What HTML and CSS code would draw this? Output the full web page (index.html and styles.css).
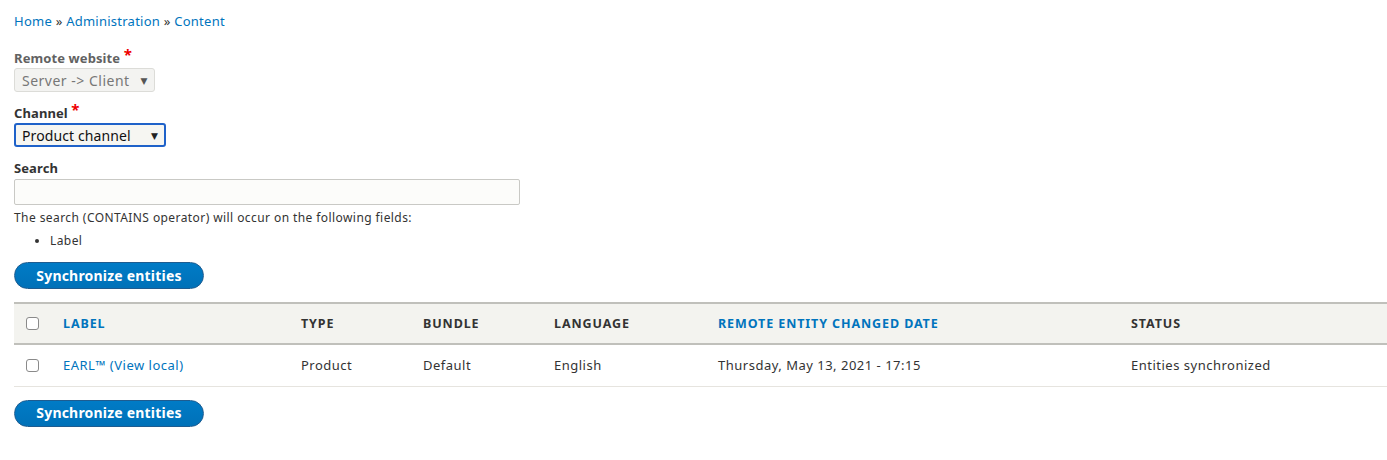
FILE: index.html
```html
<!DOCTYPE html>
<html lang="en">
<head>
<meta charset="utf-8">
<title>Content</title>
<link rel="stylesheet" href="styles.css">
</head>
<body>
<div class="page">
  <nav class="breadcrumb">
    <a href="#">Home</a> » <a href="#">Administration</a> » <a href="#">Content</a>
  </nav>

  <form class="form">
    <div class="form-item">
      <label class="form-label is-disabled">Remote website <span class="req">*</span></label>
      <div class="select select--disabled">
        <span class="select-text">Server -&gt; Client</span>
        <span class="select-arrow">▼</span>
      </div>
    </div>

    <div class="form-item form-item--channel">
      <label class="form-label">Channel <span class="req">*</span></label>
      <div class="select select--focus">
        <span class="select-text">Product channel</span>
        <span class="select-arrow">▼</span>
      </div>
    </div>

    <div class="form-item form-item--search">
      <label class="form-label form-label--search">Search</label>
      <div class="text-input"></div>
      <div class="description">
        The search (CONTAINS operator) will occur on the following fields:
        <ul class="field-list">
          <li>Label</li>
        </ul>
      </div>
    </div>

    <div class="actions">
      <button type="button" class="button-primary">Synchronize entities</button>
    </div>

    <table class="entities">
      <thead>
        <tr>
          <th class="c-check"><span class="checkbox"></span></th>
          <th class="c-label"><a href="#">LABEL</a></th>
          <th class="c-type">TYPE</th>
          <th class="c-bundle">BUNDLE</th>
          <th class="c-lang">LANGUAGE</th>
          <th class="c-date"><a href="#">REMOTE ENTITY CHANGED DATE</a></th>
          <th class="c-status">STATUS</th>
        </tr>
      </thead>
      <tbody>
        <tr>
          <td class="c-check"><span class="checkbox"></span></td>
          <td class="c-label"><a href="#">EARL™ (View local)</a></td>
          <td class="c-type">Product</td>
          <td class="c-bundle">Default</td>
          <td class="c-lang">English</td>
          <td class="c-date">Thursday, May 13, 2021 - 17:15</td>
          <td class="c-status">Entities synchronized</td>
        </tr>
      </tbody>
    </table>

    <div class="actions actions--bottom">
      <button type="button" class="button-primary">Synchronize entities</button>
    </div>
  </form>
</div>
</body>
</html>
```

FILE: styles.css
```css
* { box-sizing: border-box; }

html, body {
  margin: 0;
  padding: 0;
  background: #fff;
}

body {
  font-family: "Noto Sans", "DejaVu Sans", sans-serif;
  font-size: 13px;
  color: #333;
  letter-spacing: 0.25px;
}

a {
  color: #0074bd;
  text-decoration: none;
}

.page {
  padding: 11px 0 0 14px;
}

.breadcrumb {
  font-size: 13px;
  line-height: 20px;
  color: #333;
}

.form {
  margin-top: 17px;
}

.form-item {
  display: flex;
  flex-direction: column;
  align-items: flex-start;
  margin-bottom: 11px;
}

.form-item--channel {
  margin-bottom: 12px;
}

.form-label {
  font-weight: bold;
  font-size: 13px;
  line-height: 18px;
  color: #333;
  margin-bottom: 1px;
  letter-spacing: 0.1px;
}

.form-label--search {
  margin-bottom: 2px;
}

.form-label.is-disabled {
  color: #626262;
}

.req {
  color: #e00;
  font-size: 15px;
  position: relative;
  top: -3px;
}

.select {
  display: flex;
  align-items: center;
  justify-content: space-between;
  height: 24px;
  font-size: 14px;
  border-radius: 3px;
}

.select--disabled {
  width: 141px;
  padding: 0 6px 0 7px;
  background: #f3f3f1;
  border: 1px solid #dcdcd8;
  color: #777;
  letter-spacing: 0.5px;
}

.select--focus {
  width: 152px;
  height: 24px;
  padding: 0 6px 0 6px;
  background: #f6f6f2;
  border: 2px solid #1f62c9;
  color: #111;
  letter-spacing: 0.1px;
}

.select-arrow {
  font-size: 9px;
  color: #555;
}

.select--focus .select-arrow {
  color: #222;
}

.form-item--search {
  margin-bottom: 0;
}

.text-input {
  width: 506px;
  height: 26px;
  border: 1px solid #c9c9c5;
  border-radius: 2px;
  background: #fcfcfa;
}

.description {
  font-size: 12px;
  line-height: 18px;
  color: #333;
  margin-top: 4px;
  letter-spacing: 0.42px;
}

.field-list {
  margin: 5px 0 0;
  padding-left: 36px;
}

.field-list li {
  line-height: 18px;
}

.actions {
  margin-top: 12px;
}

.button-primary {
  font-family: inherit;
  font-size: 14px;
  font-weight: bold;
  color: #fff;
  height: 27px;
  width: 190px;
  padding: 0 0 1px;
  border: 1px solid #1e5c90;
  border-radius: 20em;
  background: linear-gradient(to bottom, #007bc6, #0071b8);
  letter-spacing: 0.2px;
}

.entities {
  margin-top: 13px;
  width: 100%;
  border-collapse: collapse;
  table-layout: fixed;
}

.entities th,
.entities td {
  text-align: left;
  padding: 0 12px;
  vertical-align: middle;
}

.entities thead tr {
  background: #f3f3ef;
  border-top: 2px solid #c0c0bb;
  border-bottom: 2px solid #c0c0bb;
}

.entities th {
  height: 41px;
  font-size: 12.5px;
  font-weight: bold;
  color: #333;
  letter-spacing: 0.9px;
}

.entities tbody tr {
  border-bottom: 1px solid #e6e4df;
}

.entities td {
  height: 42px;
  font-size: 13px;
  letter-spacing: 0.5px;
}

.c-check { width: 37px; }
.c-label { width: 238px; }
.c-type { width: 122px; }
.c-bundle { width: 131px; }
.c-lang { width: 164px; }
.c-date { width: 413px; }
.c-status { width: 268px; }

.checkbox {
  display: block;
  width: 13px;
  height: 13px;
  border: 1px solid #8a8a8a;
  border-radius: 3px;
  background: #fff;
}

.actions--bottom {
  margin-top: 13px;
}
```
